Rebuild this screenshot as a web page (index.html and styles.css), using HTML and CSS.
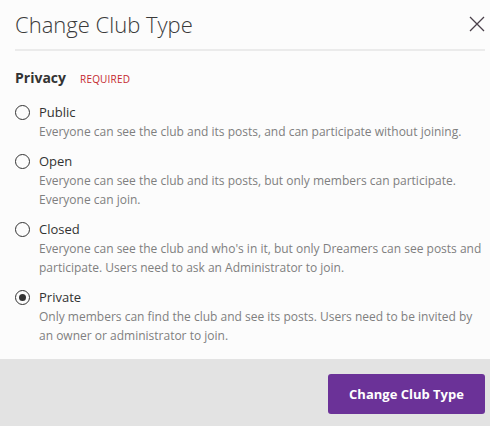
FILE: index.html
```html
<!DOCTYPE html>
<html>
<head>
<meta charset="utf-8">
<link rel="stylesheet" href="styles.css">
</head>
<body>
<div class="dialog">
  <div class="body">
    <div class="header">
      <h1 class="title">Change Club Type</h1>
      <button class="close" aria-label="Close">
        <svg width="16" height="16" viewBox="0 0 16 16"><path d="M1 1 L15 15 M15 1 L1 15" stroke="#4a404a" stroke-width="1.3" fill="none"/></svg>
      </button>
    </div>
    <div class="divider"></div>
    <div class="field-head">
      <span class="field-label">Privacy</span>
      <span class="required">REQUIRED</span>
    </div>
    <div class="options">
      <div class="option">
        <span class="radio"></span>
        <div class="opt-text">
          <div class="opt-label">Public</div>
          <div class="opt-desc">Everyone can see the club and its posts, and can participate without joining.</div>
        </div>
      </div>
      <div class="option">
        <span class="radio"></span>
        <div class="opt-text">
          <div class="opt-label">Open</div>
          <div class="opt-desc">Everyone can see the club and its posts, but only members can participate.<br>Everyone can join.</div>
        </div>
      </div>
      <div class="option">
        <span class="radio"></span>
        <div class="opt-text">
          <div class="opt-label">Closed</div>
          <div class="opt-desc">Everyone can see the club and who's in it, but only Dreamers can see posts and participate. Users need to ask an Administrator to join.</div>
        </div>
      </div>
      <div class="option">
        <span class="radio checked"></span>
        <div class="opt-text">
          <div class="opt-label">Private</div>
          <div class="opt-desc">Only members can find the club and see its posts. Users need to be invited by an owner or administrator to join.</div>
        </div>
      </div>
    </div>
  </div>
  <div class="footer">
    <button class="primary">Change Club Type</button>
  </div>
</div>
</body>
</html>
```
FILE: styles.css
```css
html, body {
  margin: 0;
  padding: 0;
  height: 100%;
}
body {
  font-family: "Open Sans", sans-serif;
  background: #fcfcfc;
  color: #333;
}
.dialog {
  display: flex;
  flex-direction: column;
  height: 426px;
}
.body {
  padding: 9px 5px 14px 15px;
  background: #fcfcfc;
}
.header {
  display: flex;
  justify-content: space-between;
  align-items: flex-start;
}
.title {
  margin: 0;
  font-size: 22px;
  font-weight: 300;
  font-stretch: 88%;
  line-height: 30px;
  color: #3a3a3a;
}
.close {
  border: 0;
  background: none;
  padding: 0;
  margin: 7px 0 0 0;
  width: 16px;
  height: 16px;
  display: block;
}
.close svg { display: block; }
.divider {
  height: 2px;
  background: #ebebeb;
  margin-top: 10px;
}
.field-head {
  margin-top: 17px;
  display: flex;
  align-items: baseline;
  gap: 14px;
  line-height: 20px;
}
.field-label {
  font-size: 14px;
  font-weight: 700;
  color: #333;
}
.required {
  font-size: 10px;
  color: #c4282d;
  letter-spacing: 0.2px;
}
.options {
  margin-top: 14px;
  display: flex;
  flex-direction: column;
  gap: 11px;
}
.option {
  display: flex;
  gap: 9px;
}
.radio {
  flex: none;
  box-sizing: border-box;
  width: 15px;
  height: 15px;
  border: 1.5px solid #333;
  border-radius: 50%;
  margin-top: 2px;
  display: flex;
  align-items: center;
  justify-content: center;
}
.radio.checked::after {
  content: "";
  width: 7px;
  height: 7px;
  border-radius: 50%;
  background: #333;
}
.opt-label {
  font-size: 13px;
  line-height: 19px;
  color: #333;
}
.opt-desc {
  font-size: 12px;
  line-height: 19px;
  color: #7f7f7f;
}
.footer {
  flex: 1;
  background: #e3e3e3;
  display: flex;
  justify-content: flex-end;
  align-items: flex-start;
  padding: 15px 5px 0 0;
}
.primary {
  width: 157px;
  height: 40px;
  border: 0;
  border-radius: 3px;
  background: #6b3298;
  color: #fff;
  font-family: "Open Sans", sans-serif;
  font-weight: 700;
  font-size: 13px;
}
```
